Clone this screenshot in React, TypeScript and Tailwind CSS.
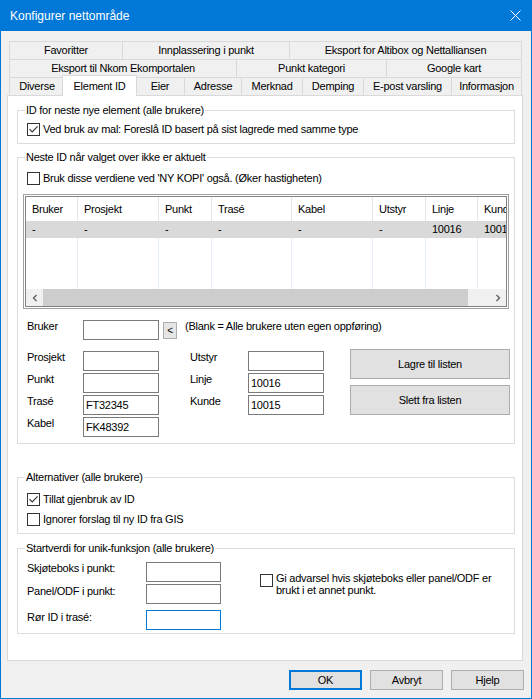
import React from "react"

type Col = { name: string; w: number; v: string }

const cols: Col[] = [
  { name: "Bruker", w: 52, v: "-" },
  { name: "Prosjekt", w: 81, v: "-" },
  { name: "Punkt", w: 53, v: "-" },
  { name: "Trasé", w: 80, v: "-" },
  { name: "Kabel", w: 81, v: "-" },
  { name: "Utstyr", w: 53, v: "-" },
  { name: "Linje", w: 52, v: "10016" },
  { name: "Kunde", w: 80, v: "10015" },
]

const tabRows = [
  [
    { name: "Favoritter", w: "w-[113px]" },
    { name: "Innplassering i punkt", w: "w-[167px]" },
    { name: "Eksport for Altibox og Nettalliansen", w: "w-[232px]" },
  ],
  [
    { name: "Eksport til Nkom Ekomportalen", w: "w-[227px]" },
    { name: "Punkt kategori", w: "w-[150px]" },
    { name: "Google kart", w: "w-[135px]" },
  ],
]

const bottomTabs = [
  { name: "Diverse", w: "w-[55px]" },
  { name: "Element ID", w: "w-[75px]", selected: true },
  { name: "Eier", w: "w-[49px]" },
  { name: "Adresse", w: "w-[57px]" },
  { name: "Merknad", w: "w-[61px]" },
  { name: "Demping", w: "w-[61px]" },
  { name: "E-post varsling", w: "w-[88px]" },
  { name: "Informasjon", w: "w-[70px]" },
]

function CheckBox({ checked }: { checked?: boolean }) {
  return (
    <span className="w-[13px] h-[13px] border border-[#333333] bg-white flex items-center justify-center shrink-0">
      {checked && (
        <svg width="11" height="11" viewBox="0 0 11 11">
          <path d="M1.5 5.2 L4.2 8 L9.6 2.4" stroke="#333333" strokeWidth="1.1" fill="none" />
        </svg>
      )}
    </span>
  )
}

function Check({ checked, label, className = "" }: { checked?: boolean; label: string; className?: string }) {
  return (
    <div className={"flex items-center gap-[3px] pl-[9px] " + className}>
      <CheckBox checked={checked} />
      <span className="leading-[13px]">{label}</span>
    </div>
  )
}

function Group({ title, className = "", children }: { title: string; className?: string; children: React.ReactNode }) {
  return (
    <fieldset className={"border border-[#dcdcdc] ml-[9px] w-[498px] " + className}>
      <legend className="ml-[7px] px-[1px] leading-[14px]">{title}</legend>
      {children}
    </fieldset>
  )
}

function TextBox({ value = "", w = "w-[76px]", focused }: { value?: string; w?: string; focused?: boolean }) {
  return (
    <div
      className={
        "h-[20px] bg-white pl-[2px] leading-[18px] border shrink-0 " +
        w +
        (focused ? " border-[#0078d7]" : " border-[#7a7a7a]")
      }
    >
      {value}
    </div>
  )
}

function Field({ label, value, lw = "w-[56px]" }: { label: string; value?: string; lw?: string }) {
  return (
    <div className="flex items-start">
      <span className={"leading-[13px] " + lw}>{label}</span>
      <TextBox value={value} />
    </div>
  )
}

function WinButton({ label, className = "" }: { label: string; className?: string }) {
  return (
    <div className={"bg-[#e1e1e1] flex items-center justify-center " + className}>{label}</div>
  )
}

function Grid() {
  return (
    <div className="ml-[5px] mt-[9px] w-[486px] h-[115px] border border-[#a0a0a0] p-[1px] bg-white">
      <div className="h-full border border-[#828282] flex flex-col overflow-hidden">
        <div className="flex flex-1 overflow-hidden">
          {cols.map((c) => (
            <div key={c.name} className="flex flex-col shrink-0" style={{ width: c.w }}>
              <div className="h-[24px] flex items-center pl-[6px] border-r border-[#e5e5e5]">{c.name}</div>
              <div className="h-[17px] flex items-center pl-[6px] bg-[#d9d9d9]">{c.v}</div>
              <div className="flex-1 border-r border-[#e6eef8]" />
            </div>
          ))}
        </div>
        <div className="h-[17px] flex bg-[#f0f0f0] shrink-0">
          <div className="w-[17px] flex items-center justify-center">
            <svg width="8" height="8" viewBox="0 0 8 8">
              <path d="M5.5 1 L2.5 4 L5.5 7" stroke="#606060" strokeWidth="1.4" fill="none" />
            </svg>
          </div>
          <div className="w-[425px] bg-[#cdcdcd]" />
          <div className="flex-1" />
          <div className="w-[17px] flex items-center justify-center">
            <svg width="8" height="8" viewBox="0 0 8 8">
              <path d="M2.5 1 L5.5 4 L2.5 7" stroke="#606060" strokeWidth="1.4" fill="none" />
            </svg>
          </div>
        </div>
      </div>
    </div>
  )
}

export default function App() {
  return (
    <div className="w-[532px] h-[699px] bg-[#0078d7] flex flex-col font-['Liberation_Sans',Arial,sans-serif] text-[11px] tracking-[-0.25px] text-black">
      <div className="h-[31px] flex items-center justify-between shrink-0 text-white">
        <span className="pl-[10px] text-[12px] tracking-normal">Konfigurer nettområde</span>
        <svg width="11" height="11" viewBox="0 0 11 11" className="mr-[11px]">
          <path d="M0.5 0.5 L10.5 10.5 M10.5 0.5 L0.5 10.5" stroke="white" strokeWidth="1" />
        </svg>
      </div>

      <div className="flex-1 mx-[1px] mb-[1px] bg-[#f0f0f0] flex flex-col">
        <div className="ml-[6px] mt-[10px] w-[516px]">
          {tabRows.map((row, i) => (
            <div key={i} className="ml-[2px] w-[513px] h-[18px] flex border-r border-[#d9d9d9]">
              {row.map((t) => (
                <div
                  key={t.name}
                  className={"h-full border-l border-t border-[#d9d9d9] flex items-center justify-center " + t.w}
                >
                  {t.name}
                </div>
              ))}
            </div>
          ))}
          <div className="ml-[2px] w-[513px] h-[18px] flex items-end border-r border-[#d9d9d9]">
            {bottomTabs.map((t) =>
              t.selected ? (
                <div
                  key={t.name}
                  className={
                    "h-[21px] -mx-[2px] -mb-[1px] relative z-10 bg-white border-l border-t border-r border-[#d9d9d9] flex items-start pt-[2px] justify-center shrink-0 " +
                    t.w
                  }
                >
                  {t.name}
                </div>
              ) : (
                <div
                  key={t.name}
                  className={"h-full border-l border-t border-[#d9d9d9] flex items-center justify-center shrink-0 " + t.w}
                >
                  {t.name}
                </div>
              )
            )}
          </div>

          <div className="w-[516px] h-[566px] border border-[#d9d9d9] bg-white flex flex-col">
            <Group title="ID for neste nye element (alle brukere)" className="mt-[7px] pt-[6px] pb-[7px]">
              <Check checked label="Ved bruk av mal: Foreslå ID basert på sist lagrede med samme type" />
            </Group>

            <Group title="Neste ID når valget over ikke er aktuelt" className="mt-[6px] pt-[8px] pb-[6px]">
              <Check label="Bruk disse verdiene ved 'NY KOPI' også. (Øker hastigheten)" />
              <Grid />

              <div className="flex items-start mt-[11px] ml-[9px]">
                <span className="leading-[13px] w-[56px]">Bruker</span>
                <TextBox />
                <div className="ml-[4px] mt-[2px] w-[14px] h-[17px] bg-[#e5e5e5] border border-[#adadad] flex items-center justify-center text-[10px]">
                  &lt;
                </div>
                <span className="ml-[8px] leading-[13px]">(Blank = Alle brukere uten egen oppføring)</span>
              </div>

              <div className="flex items-start mt-[11px] ml-[9px]">
                <div className="flex flex-col gap-[2px]">
                  <Field label="Prosjekt" />
                  <Field label="Punkt" />
                  <Field label="Trasé" value="FT32345" />
                  <Field label="Kabel" value="FK48392" />
                </div>
                <div className="flex flex-col gap-[2px] ml-[31px]">
                  <Field label="Utstyr" lw="w-[58px]" />
                  <Field label="Linje" value="10016" lw="w-[58px]" />
                  <Field label="Kunde" value="10015" lw="w-[58px]" />
                </div>
                <div className="flex flex-col gap-[6px] ml-[26px] -mt-[2px]">
                  <WinButton label="Lagre til listen" className="w-[160px] h-[30px] border border-[#adadad]" />
                  <WinButton label="Slett fra listen" className="w-[160px] h-[30px] border border-[#adadad]" />
                </div>
              </div>
            </Group>

            <Group title="Alternativer (alle brukere)" className="mt-[26px] pt-[9px] pb-[7px]">
              <Check checked label="Tillat gjenbruk av ID" />
              <Check label="Ignorer forslag til ny ID fra GIS" className="mt-[7px]" />
            </Group>

            <Group title="Startverdi for unik-funksjon (alle brukere)" className="mt-[7px] pt-[7px] pb-[3px]">
              <div className="flex items-start ml-[9px]">
                <div className="flex flex-col">
                  <div className="flex items-start">
                    <span className="leading-[13px] w-[119px]">Skjøteboks i punkt:</span>
                    <TextBox w="w-[75px]" />
                  </div>
                  <div className="flex items-start mt-[2px]">
                    <span className="leading-[13px] w-[119px] pt-[1px]">Panel/ODF i punkt:</span>
                    <TextBox w="w-[75px]" />
                  </div>
                  <div className="flex items-start mt-[6px]">
                    <span className="leading-[13px] w-[119px] pt-[1px]">Rør ID i trasé:</span>
                    <TextBox w="w-[75px]" focused />
                  </div>
                </div>
                <div className="flex items-start ml-[39px] mt-[10px]">
                  <span className="mt-[2px]">
                    <CheckBox />
                  </span>
                  <span className="ml-[3px] leading-[12px]">
                    Gi advarsel hvis skjøteboks eller panel/ODF er
                    <br />
                    brukt i et annet punkt.
                  </span>
                </div>
              </div>
            </Group>
          </div>
        </div>

        <div className="flex justify-end gap-[8px] mt-[9px] mr-[7px]">
          <WinButton label="OK" className="w-[73px] h-[20px] border-2 border-[#0078d7]" />
          <WinButton label="Avbryt" className="w-[73px] h-[20px] border border-[#adadad]" />
          <WinButton label="Hjelp" className="w-[73px] h-[20px] border border-[#adadad]" />
        </div>
      </div>
    </div>
  )
}
